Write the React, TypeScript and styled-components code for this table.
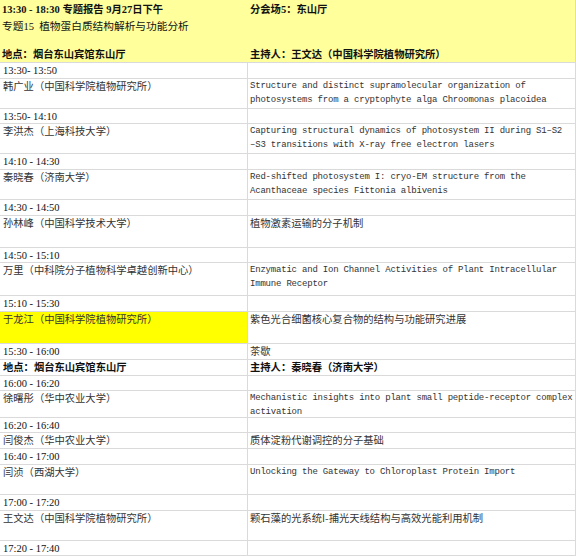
import React from "react";
import styled, { createGlobalStyle } from "styled-components";

const Global = createGlobalStyle`
  html, body { margin: 0; padding: 0; overflow: hidden; background: #fff; }
  * { box-sizing: border-box; }
`;

const CJK = `"Noto Sans CJK SC", sans-serif`;
const SERIF = `"Liberation Serif", "Noto Sans CJK SC", serif`;
const MONO = `"Liberation Mono", "Noto Sans CJK SC", monospace`;

const Sheet = styled.div`
  width: 576px;
  padding-right: 1px;
  background: #dadada;
  display: flex;
  flex-direction: column;
  gap: 1px;
  color: #222;
`;

const Header = styled.div`
  height: 62px;
  background: #ffff9c;
  display: grid;
  grid-template-columns: 248px 1fr;
`;

const HeadCol = styled.div`
  display: grid;
  grid-template-rows: 17px 17px 1fr 17px;
  padding-left: 2px;
`;

const HeadLine = styled.div<{ $bold?: boolean }>`
  font-family: ${SERIF};
  font-size: 10.5px;
  line-height: 17px;
  font-weight: ${(p) => (p.$bold ? 700 : 400)};
  color: #111;
  white-space: pre;
  & .c {
    font-family: ${CJK};
    font-size: ${(p) => (p.$bold ? 10.3 : 10.7)}px;
  }
`;

const Row = styled.div<{ $h: number }>`
  height: ${(p) => p.$h}px;
  display: grid;
  grid-template-columns: 247px 1fr;
  gap: 1px;
`;

const Cell = styled.div<{ $hl?: boolean; $right?: boolean }>`
  background: ${(p) => (p.$hl ? "#ffff00" : "#fff")};
  padding-left: ${(p) => (p.$right ? 2 : 3)}px;
  overflow: hidden;
`;

const Time = styled.div`
  font-family: ${SERIF};
  font-size: 10.5px;
  line-height: 15px;
  color: #111;
  white-space: nowrap;
`;

const Name = styled.div<{ $bold?: boolean }>`
  font-family: ${CJK};
  font-size: 10.3px;
  line-height: 14px;
  font-weight: ${(p) => (p.$bold ? 700 : 400)};
  color: ${(p) => (p.$bold ? "#111" : "#333")};
  white-space: nowrap;
`;

const Eng = styled.div`
  font-family: ${MONO};
  font-size: 9px;
  letter-spacing: -0.2px;
  line-height: 14px;
  color: #333;
  white-space: pre-line;
`;

const Tail = styled.div`
  height: 2px;
  background: #ffff9c;
`;

type RowData =
  | { k: "time"; t: string; h: number; r?: string }
  | { k: "talk"; n: string; r: string; h: number; mono?: boolean; hl?: boolean }
  | { k: "host"; n: string; r: string; h: number };

const rows: RowData[] = [
  { k: "time", t: "13:30- 13:50", h: 15 },
  {
    k: "talk",
    n: "韩广业（中国科学院植物研究所）",
    r: "Structure and distinct supramolecular organization of\nphotosystems from a cryptophyte alga Chroomonas placoidea",
    h: 29,
    mono: true,
  },
  { k: "time", t: "13:50- 14:10", h: 14 },
  {
    k: "talk",
    n: "李洪杰（上海科技大学）",
    r: "Capturing structural dynamics of photosystem II during S1\u2013S2\n\u2013S3 transitions with X-ray free electron lasers",
    h: 29,
    mono: true,
  },
  { k: "time", t: "14:10 - 14:30", h: 15 },
  {
    k: "talk",
    n: "秦晓春（济南大学）",
    r: "Red-shifted photosystem I: cryo-EM structure from the\nAcanthaceae species Fittonia albivenis",
    h: 29,
    mono: true,
  },
  { k: "time", t: "14:30 - 14:50", h: 15 },
  { k: "talk", n: "孙林峰（中国科学技术大学）", r: "植物激素运输的分子机制", h: 31 },
  { k: "time", t: "14:50 - 15:10", h: 14 },
  {
    k: "talk",
    n: "万里（中科院分子植物科学卓越创新中心）",
    r: "Enzymatic and Ion Channel Activities of Plant Intracellular\nImmune Receptor",
    h: 32,
    mono: true,
  },
  { k: "time", t: "15:10 - 15:30", h: 15 },
  {
    k: "talk",
    n: "于龙江（中国科学院植物研究所）",
    r: "紫色光合细菌核心复合物的结构与功能研究进展",
    h: 31,
    hl: true,
  },
  { k: "time", t: "15:30 - 16:00", h: 15, r: "茶歇" },
  { k: "host", n: "地点：烟台东山宾馆东山厅", r: "主持人：秦晓春（济南大学）", h: 15 },
  { k: "time", t: "16:00 - 16:20", h: 14 },
  {
    k: "talk",
    n: "徐曙彤（华中农业大学）",
    r: "Mechanistic insights into plant small peptide-receptor complex\nactivation",
    h: 26,
    mono: true,
  },
  { k: "time", t: "16:20 - 16:40", h: 14 },
  { k: "talk", n: "闫俊杰（华中农业大学）", r: "质体淀粉代谢调控的分子基础", h: 15 },
  { k: "time", t: "16:40 - 17:00", h: 15 },
  {
    k: "talk",
    n: "闫浈（西湖大学）",
    r: "Unlocking the Gateway to Chloroplast Protein Import",
    h: 29,
    mono: true,
  },
  { k: "time", t: "17:00 - 17:20", h: 15 },
  {
    k: "talk",
    n: "王文达（中国科学院植物研究所）",
    r: "颗石藻的光系统I-捕光天线结构与高效光能利用机制",
    h: 29,
  },
  { k: "time", t: "17:20 - 17:40", h: 14 },
];

export default function App() {
  return (
    <>
      <Global />
      <Sheet>
        <Header>
          <HeadCol>
            <HeadLine $bold>
              13:30 - 18:30 <span className="c">专题报告</span> 9<span className="c">月</span>27
              <span className="c">日下午</span>
            </HeadLine>
            <HeadLine>
              <span className="c">专题</span>15  <span className="c">植物蛋白质结构解析与功能分析</span>
            </HeadLine>
            <div />
            <HeadLine $bold>
              <span className="c">地点：烟台东山宾馆东山厅</span>
            </HeadLine>
          </HeadCol>
          <HeadCol>
            <HeadLine $bold>
              <span className="c">分会场</span>5<span className="c">：东山厅</span>
            </HeadLine>
            <div />
            <div />
            <HeadLine $bold>
              <span className="c">主持人：王文达（中国科学院植物研究所）</span>
            </HeadLine>
          </HeadCol>
        </Header>
        {rows.map((row, i) => {
          if (row.k === "time") {
            return (
              <Row key={i} $h={row.h}>
                <Cell>
                  <Time>{row.t}</Time>
                </Cell>
                <Cell $right>{row.r ? <Name>{row.r}</Name> : null}</Cell>
              </Row>
            );
          }
          if (row.k === "host") {
            return (
              <Row key={i} $h={row.h}>
                <Cell>
                  <Name $bold>{row.n}</Name>
                </Cell>
                <Cell $right>
                  <Name $bold>{row.r}</Name>
                </Cell>
              </Row>
            );
          }
          return (
            <Row key={i} $h={row.h}>
              <Cell $hl={row.hl}>
                <Name>{row.n}</Name>
              </Cell>
              <Cell $right>
                {row.mono ? <Eng>{row.r}</Eng> : <Name>{row.r}</Name>}
              </Cell>
            </Row>
          );
        })}
        <Tail />
      </Sheet>
    </>
  );
}
